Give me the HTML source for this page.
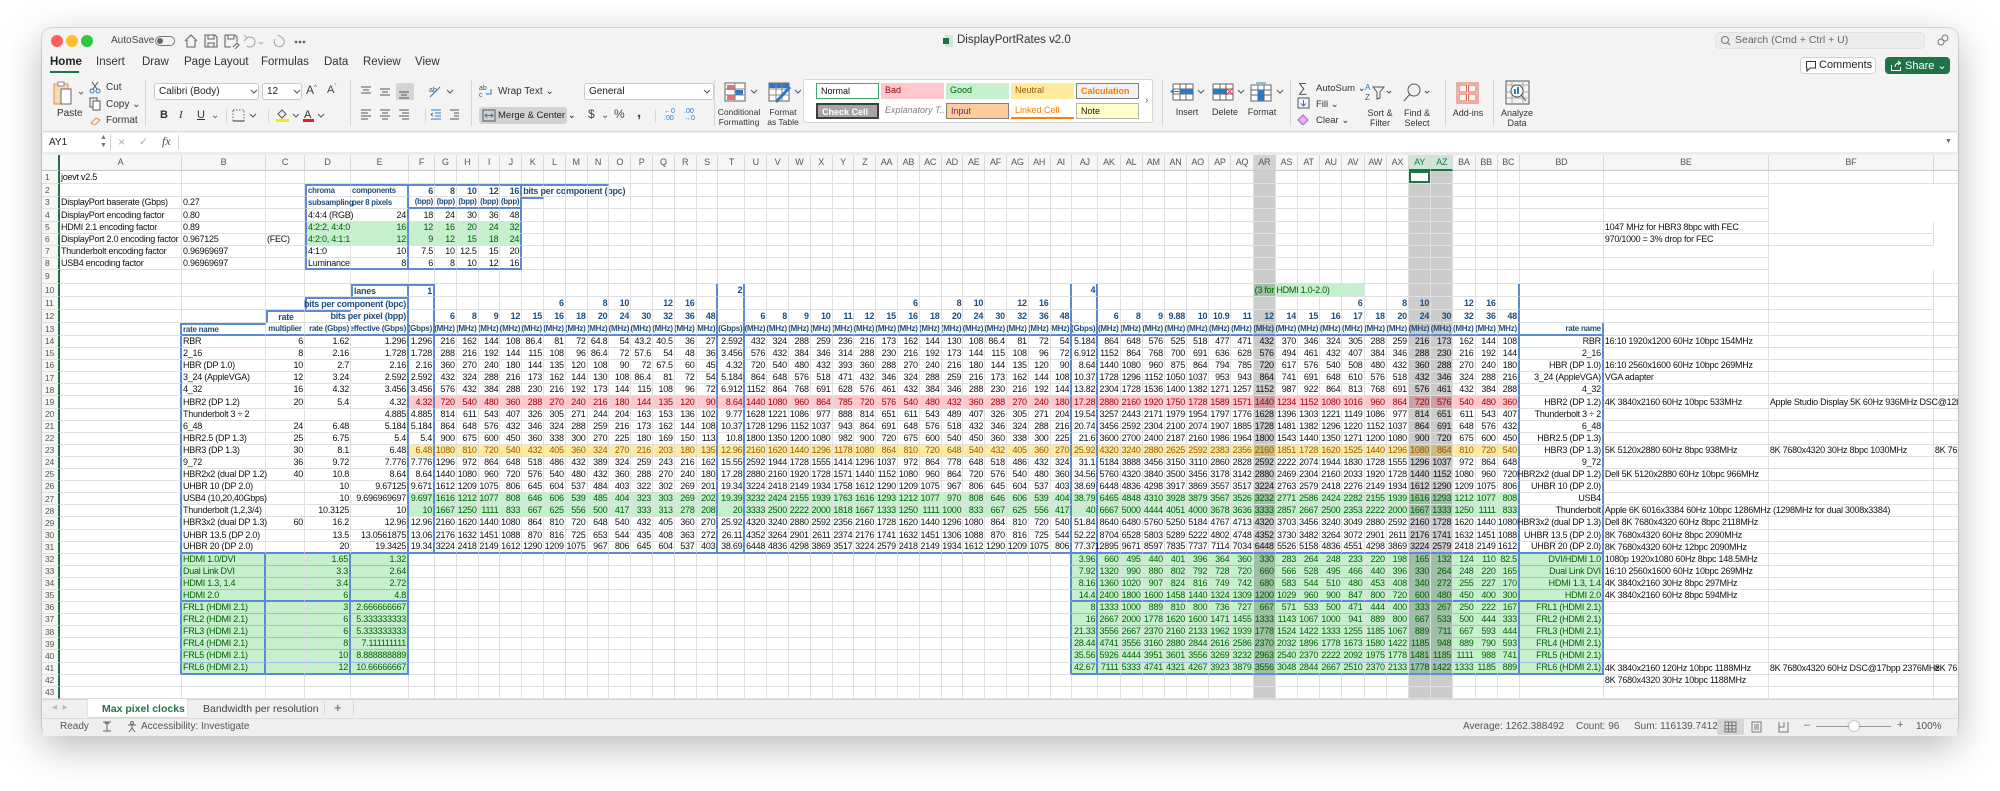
<!DOCTYPE html>
<html><head><meta charset="utf-8">
<style>
*{margin:0;padding:0}
body{width:2000px;height:791px;background:#fff;position:relative;overflow:hidden;font-family:"Liberation Sans",sans-serif;color:#222}
.a{position:absolute;white-space:nowrap}
#win{position:absolute;left:42px;top:28px;width:1916px;height:707px;border-radius:10px;background:#f3f3f3;box-shadow:0 12px 40px rgba(0,0,0,.28),0 0 0 1px rgba(0,0,0,.12);overflow:hidden}
.t11{font-size:11px;color:#333}
.t10{font-size:10px;color:#333}
.sep{position:absolute;width:1px;background:#d6d6d6}
.box{position:absolute;background:#fff;border:1px solid #c8c8c8;border-radius:3px;box-sizing:border-box}
.lbl{position:absolute;font-size:9px;color:#333;text-align:center;line-height:10px;transform:translateX(-50%);white-space:nowrap}
.st{position:absolute;top:83px;height:16px;width:63px;box-sizing:border-box;font-size:9px;line-height:14px;padding-left:4px;white-space:nowrap;overflow:hidden}
.st2{top:103px}
#g{position:absolute;left:42px;top:155px;width:1916px;height:544px;overflow:hidden;background:#fff;font-size:9px;color:#111;letter-spacing:-0.25px}
.r{display:flex;height:12.1px}
.r>*{flex:none;width:21.8px;box-sizing:border-box;border-right:1px solid #e0e0e0;border-bottom:1px solid #e0e0e0;display:flex;align-items:center;justify-content:flex-end;white-space:nowrap;padding:0 1px;font-style:normal;font-weight:normal;line-height:1}
.r>:nth-child(1){width:18px;justify-content:flex-start;padding-left:3px;background:#f6f6f6;color:#555;border-right:2px solid #217346;font-size:8.5px}
.r>:nth-child(2){width:122px;justify-content:flex-start}
.r>:nth-child(3){width:84px;justify-content:flex-start}
.r>:nth-child(4){width:39px}
.r>:nth-child(5){width:46px}
.r>:nth-child(6){width:58px}
.r>:nth-child(7){width:26px}
.r>:nth-child(21){width:27px}
.r>:nth-child(37){width:26px}
.r>:nth-child(n+38):nth-child(-n+56){width:22.2px}
.r>:nth-child(57){width:84px}
.r>:nth-child(58),.r>:nth-child(59){width:165px;justify-content:flex-start}
.r>:nth-child(60){width:30px;justify-content:flex-start}
.ch{height:16px}
.ch>*{justify-content:center!important;background:#f6f6f6;color:#555;border-right:1px solid #d8d8d8;border-bottom:1px solid #c8c8c8;font-size:9px}
.ch>:nth-child(45){background:#d2d2d2}
.ch>:nth-child(52),.ch>:nth-child(53){background:#cfe6d7;color:#217346;border-bottom:2px solid #217346}
.r:not(.ch)>:nth-child(45),.r:not(.ch)>:nth-child(52),.r:not(.ch)>:nth-child(53){background-image:linear-gradient(rgba(0,0,0,.2),rgba(0,0,0,.2))}
.r>.sel{background-image:none!important;background:#fff;box-shadow:inset 0 0 0 2px #217346}
.red>:nth-child(n+7):nth-child(-n+56){background-color:#ffc7ce;color:#9c0006}
.yel>:nth-child(n+7):nth-child(-n+56){background-color:#ffeb9c;color:#9c5700}
.grn>:nth-child(n+7):nth-child(-n+56){background-color:#c6efce;color:#006100}
.h>:nth-child(n+3):nth-child(-n+6),.h>:nth-child(n+37):nth-child(-n+57){background-color:#c6efce;color:#006100}
.t>:nth-child(2),.t>:nth-child(6),.t>:nth-child(7),.t>:nth-child(20),.t>:nth-child(21),.t>:nth-child(36),.t>:nth-child(37),.t>:nth-child(56),.t>:nth-child(57){border-right:2px solid #5b8bd3}
.t0>:nth-child(6),.t0>:nth-child(7),.t0>:nth-child(20),.t0>:nth-child(21),.t0>:nth-child(36),.t0>:nth-child(37),.t0>:nth-child(56){border-right:2px solid #5b8bd3}
.t2>:nth-child(2),.t2>:nth-child(3),.t2>:nth-child(5),.t2>:nth-child(6),.t2>:nth-child(36),.t2>:nth-child(37),.t2>:nth-child(56),.t2>:nth-child(57){border-right:2px solid #5b8bd3}
.t2>:nth-child(3),.t2>:nth-child(4),.t2>:nth-child(5),.t2>:nth-child(6),.t2>:nth-child(n+37):nth-child(-n+57){border-bottom-color:#9dbbe6}
.bb>:nth-child(n+3):nth-child(-n+57){border-bottom:2px solid #5b8bd3}
.bb2>:nth-child(n+3):nth-child(-n+6),.bb2>:nth-child(n+37):nth-child(-n+57){border-bottom:2px solid #5b8bd3}
.hb>*{font-weight:bold;color:#1f4e79}
.hb>:nth-child(1){font-weight:normal;color:#555}
.m>*{overflow:hidden;font-size:8px}
.bh{font-weight:bold!important;color:#1f4e79!important}
.sm{font-size:7.8px}
.l{justify-content:flex-start!important}
.c{justify-content:center!important}
.bL{border-left:2px solid #5b8bd3}
.bR{border-right:2px solid #5b8bd3!important}
.bT{border-top:2px solid #5b8bd3}
.bB{border-bottom:2px solid #5b8bd3!important}
.g{background-color:#c6efce;color:#006100}
.z{position:relative;z-index:2}
</style></head><body>
<div id="win"></div>

<!-- title bar -->
<div class="a" style="left:51px;top:35px;width:12px;height:12px;border-radius:6px;background:#ff5f57"></div>
<div class="a" style="left:66px;top:35px;width:12px;height:12px;border-radius:6px;background:#febc2e"></div>
<div class="a" style="left:81px;top:35px;width:12px;height:12px;border-radius:6px;background:#28c840"></div>
<div class="a" style="left:111px;top:35px;font-size:10px;color:#444">AutoSave</div>
<div class="a" style="left:155px;top:36px;width:20px;height:10px;border:1px solid #777;border-radius:6px;box-sizing:border-box"><div style="position:absolute;left:1px;top:1px;width:6px;height:6px;border-radius:3px;background:#666"></div></div>
<svg class="a" style="left:183px;top:33px" width="130" height="16" viewBox="0 0 130 16" fill="none" stroke="#666" stroke-width="1.1"><path d="M2 8 L8 2 L14 8 M4 7 V14 H12 V7"/><path d="M22 2 H32 L34 4 V14 H22 Z M25 2 V6 H31 V2 M25 14 V10 H31 V14"/><path d="M42 2 H52 L54 4 V9 M42 2 V14 H48 M45 2 V6 H51 V2 M50 14 L54 10 L56 12 L52 16"/><path d="M64 5 A5 5 0 1 1 64 13 M64 5 L61 2 M64 5 L61 8" stroke="#aaa"/><path d="M76 9 L78 11 L80 9" stroke="#aaa"/><path d="M98 4 A5 5 0 1 1 92 6 M98 4 L95 2" stroke="#aaa"/><circle cx="113" cy="9" r=".8" fill="#666"/><circle cx="117" cy="9" r=".8" fill="#666"/><circle cx="121" cy="9" r=".8" fill="#666"/></svg>
<svg class="a" style="left:943px;top:35px" width="10" height="12" viewBox="0 0 10 12"><rect x="2" y="0" width="8" height="12" fill="#cfe7d8"/><rect x="0" y="3" width="6" height="6" fill="#1d7044"/></svg>
<div class="a" style="left:957px;top:34px;font-size:11.5px;color:#333">DisplayPortRates v2.0</div>
<svg class="a" style="left:1052px;top:38px" width="8" height="6"><path d="M1 1 L4 4 L7 1" stroke="#777" fill="none"/></svg>
<div class="a" style="left:1715px;top:32px;width:210px;height:17px;border-radius:5px;background:#ececec;border:1px solid #e0e0e0;box-sizing:border-box"></div>
<svg class="a" style="left:1720px;top:35px" width="11" height="11"><circle cx="5" cy="5" r="3.5" stroke="#777" fill="none"/><path d="M7.5 7.5 L10 10" stroke="#777"/></svg>
<div class="a" style="left:1735px;top:34px;font-size:10.5px;color:#666">Search (Cmd + Ctrl + U)</div>
<svg class="a" style="left:1936px;top:33px" width="14" height="14" fill="none" stroke="#777"><circle cx="9" cy="5" r="3"/><circle cx="5" cy="9" r="3"/></svg>

<!-- tabs -->
<div class="a" style="left:50px;top:56px;font-size:11.5px;font-weight:bold;color:#222">Home</div>
<div class="a" style="left:50px;top:71px;width:29px;height:2px;background:#217346"></div>
<div class="a" style="left:96px;top:56px;font-size:11.5px;color:#333">Insert</div>
<div class="a" style="left:142px;top:56px;font-size:11.5px;color:#333">Draw</div>
<div class="a" style="left:184px;top:56px;font-size:11.5px;color:#333">Page Layout</div>
<div class="a" style="left:261px;top:56px;font-size:11.5px;color:#333">Formulas</div>
<div class="a" style="left:324px;top:56px;font-size:11.5px;color:#333">Data</div>
<div class="a" style="left:363px;top:56px;font-size:11.5px;color:#333">Review</div>
<div class="a" style="left:415px;top:56px;font-size:11.5px;color:#333">View</div>
<div class="a" style="left:1800px;top:57px;width:76px;height:17px;background:#fff;border:1px solid #d0d0d0;border-radius:4px;box-sizing:border-box"></div>
<svg class="a" style="left:1805px;top:60px" width="12" height="12" fill="none" stroke="#333"><path d="M1.5 1.5 H10.5 V8 H5 L2 11 V8 H1.5 Z"/></svg>
<div class="a" style="left:1819px;top:59px;font-size:11px;color:#222">Comments</div>
<div class="a" style="left:1885px;top:57px;width:65px;height:17px;background:#217346;border-radius:4px"></div>
<svg class="a" style="left:1890px;top:60px" width="12" height="12" fill="none" stroke="#fff"><path d="M1.5 5 V10.5 H10.5 V7 M5 7 C5 4 7 3 10 3 M8 1 L10.5 3 L8 5"/></svg>
<div class="a" style="left:1905px;top:59px;font-size:11px;color:#fff">Share ⌄</div>

<!-- ribbon: clipboard -->
<svg class="a" style="left:52px;top:81px" width="34" height="26" viewBox="0 0 34 26"><rect x="2" y="3" width="14" height="20" fill="#f6d9b5" stroke="#e0913a"/><rect x="6" y="1" width="6" height="4" fill="#fff" stroke="#888"/><rect x="9" y="8" width="10" height="15" fill="#fff" stroke="#666"/><path d="M27 11 L29 13 L31 11" stroke="#666" fill="none"/></svg>
<div class="a t10" style="left:57px;top:108px">Paste</div>
<svg class="a" style="left:88px;top:81px" width="14" height="44" fill="none" stroke="#555"><circle cx="4" cy="10" r="2" stroke="#2b78c5"/><circle cx="10" cy="10" r="2" stroke="#2b78c5"/><path d="M5 8 L10 1 M9 8 L4 1"/><rect x="2" y="17" width="7" height="9"/><rect x="5" y="20" width="7" height="9" fill="#fff"/><path d="M3 42 L8 37 L12 39 L7 44 Z" stroke="#e0913a"/></svg>
<div class="a t10" style="left:106px;top:82px">Cut</div>
<div class="a t10" style="left:106px;top:99px">Copy ⌄</div>
<div class="a t10" style="left:106px;top:115px">Format</div>
<div class="sep" style="left:145px;top:80px;height:46px"></div>
<!-- font -->
<div class="box" style="left:154px;top:83px;width:105px;height:17px"></div>
<div class="a t10" style="left:159px;top:86px;color:#222">Calibri (Body)</div>
<svg class="a" style="left:250px;top:89px" width="8" height="6"><path d="M1 1 L4 4 L7 1" stroke="#555" fill="none"/></svg>
<div class="box" style="left:262px;top:83px;width:40px;height:17px"></div>
<div class="a t10" style="left:267px;top:86px;color:#222">12</div>
<svg class="a" style="left:293px;top:89px" width="8" height="6"><path d="M1 1 L4 4 L7 1" stroke="#555" fill="none"/></svg>
<div class="a" style="left:306px;top:83px;font-size:12px;color:#444">A<sup style="font-size:6px">^</sup></div>
<div class="a" style="left:327px;top:84px;font-size:11px;color:#444">A<sup style="font-size:6px">ˇ</sup></div>
<div class="a" style="left:160px;top:109px;font-size:11px;font-weight:bold;color:#333">B</div>
<div class="a" style="left:179px;top:109px;font-size:11px;font-style:italic;font-family:'Liberation Serif',serif;color:#333">I</div>
<div class="a" style="left:197px;top:109px;font-size:11px;text-decoration:underline;color:#333">U</div>
<div class="a t10" style="left:211px;top:110px;color:#555">⌄</div>
<div class="sep" style="left:226px;top:109px;height:14px"></div>
<svg class="a" style="left:232px;top:109px" width="30" height="13" fill="none" stroke="#666"><rect x="1" y="1" width="11" height="11" stroke-dasharray="1.5 1.5"/><path d="M1 12 H12" stroke="#333"/><path d="M18 5 L21 8 L24 5" stroke="#555"/></svg>
<div class="sep" style="left:268px;top:109px;height:14px"></div>
<svg class="a" style="left:275px;top:107px" width="50" height="16"><path d="M3 7 L7 3 L11 7 L7 11 Z" stroke="#555" fill="none"/><rect x="1" y="12" width="13" height="3" fill="#ffe600"/><path d="M18 7 L21 10 L24 7" stroke="#555" fill="none"/><text x="29" y="11" font-size="11" fill="#333" font-family="Liberation Sans">A</text><rect x="28" y="12" width="11" height="3" fill="#e02020"/><path d="M43 7 L46 10 L49 7" stroke="#555" fill="none"/></svg>
<div class="sep" style="left:350px;top:80px;height:46px"></div>
<!-- alignment -->
<div class="a" style="left:396px;top:83px;width:18px;height:17px;background:#d4d4d4;border-radius:2px"></div>
<svg class="a" style="left:359px;top:85px" width="100" height="40" fill="none" stroke="#555"><path d="M2 2 H12 M4 5 H10 M2 8 H12"/><path d="M21 4 H31 M23 7 H29 M21 10 H31"/><path d="M40 7 H50 M42 10 H48 M40 13 H50"/><path d="M2 25 H12 M2 28 H9 M2 31 H12 M2 34 H9"/><path d="M21 25 H31 M23 28 H29 M21 31 H31 M23 34 H29"/><path d="M40 25 H50 M43 28 H50 M40 31 H50 M43 34 H50"/><path d="M72 25 H82 M76 28 H82 M76 31 H82 M72 34 H82 M74 28 L72 29.5 L74 31" stroke="#2b78c5"/><path d="M91 25 H101 M95 28 H101 M95 31 H101 M91 34 H101"/></svg>
<svg class="a" style="left:428px;top:84px" width="28" height="16" fill="none" stroke="#555"><path d="M2 13 L12 3" stroke="#2b78c5"/><text x="1" y="8" font-size="7" fill="#555" stroke="none" font-family="Liberation Sans">ab</text><path d="M19 6 L22 9 L25 6"/></svg>
<div class="sep" style="left:425px;top:109px;height:14px"></div>
<div class="sep" style="left:471px;top:80px;height:46px"></div>
<svg class="a" style="left:478px;top:83px" width="16" height="16"><text x="1" y="7" font-size="7" fill="#555" font-family="Liberation Sans">ab</text><text x="1" y="14" font-size="7" fill="#555" font-family="Liberation Sans">c</text><path d="M8 11 H13 V6" stroke="#2b78c5" fill="none"/></svg>
<div class="a t10" style="left:498px;top:86px">Wrap Text ⌄</div>
<div class="a" style="left:479px;top:107px;width:88px;height:17px;background:#d2d2d2;border-radius:3px"></div>
<svg class="a" style="left:482px;top:109px" width="14" height="13" fill="none" stroke="#2b78c5"><rect x="1" y="1" width="12" height="11" stroke="#555"/><path d="M3 6.5 H11 M5 4.5 L3 6.5 L5 8.5 M9 4.5 L11 6.5 L9 8.5"/></svg>
<div class="a" style="left:498px;top:110px;font-size:9.5px;color:#222">Merge &amp; Center ⌄</div>
<!-- number -->
<div class="box" style="left:584px;top:83px;width:130px;height:17px"></div>
<div class="a t10" style="left:589px;top:86px;color:#222">General</div>
<svg class="a" style="left:703px;top:89px" width="8" height="6"><path d="M1 1 L4 4 L7 1" stroke="#555" fill="none"/></svg>
<div class="a" style="left:588px;top:107px;font-size:12px;color:#444">$</div>
<div class="a t10" style="left:601px;top:110px;color:#555">⌄</div>
<div class="a" style="left:614px;top:107px;font-size:12px;color:#444">%</div>
<div class="a" style="left:637px;top:104px;font-size:15px;font-weight:bold;color:#444">,</div>
<div class="sep" style="left:655px;top:109px;height:14px"></div>
<div class="a" style="left:664px;top:108px;font-size:7px;line-height:7px;color:#2b78c5">←0<br>.00</div>
<div class="a" style="left:684px;top:108px;font-size:7px;line-height:7px;color:#2b78c5">.00<br>→0</div>
<div class="sep" style="left:714px;top:80px;height:46px"></div>
<!-- styles -->
<svg class="a" style="left:724px;top:82px" width="36" height="20"><rect x="1" y="1" width="20" height="18" fill="#fff" stroke="#666"/><rect x="3" y="3" width="8" height="5" fill="#f06a78"/><rect x="11" y="8" width="8" height="5" fill="#2b78c5"/><rect x="3" y="13" width="8" height="5" fill="#f06a78"/><path d="M1 7 H21 M1 13 H21 M11 1 V19" stroke="#888"/><path d="M27 8 L30 11 L33 8" stroke="#555" fill="none"/></svg>
<div class="lbl" style="left:739px;top:107px;font-size:8.5px">Conditional<br>Formatting</div>
<svg class="a" style="left:768px;top:82px" width="36" height="22"><rect x="1" y="1" width="20" height="18" fill="#fff" stroke="#666"/><rect x="1" y="1" width="20" height="5" fill="#2b78c5"/><path d="M1 7 H21 M1 13 H21 M8 1 V19 M14 1 V19" stroke="#888"/><path d="M8 20 L22 5" stroke="#2b78c5" stroke-width="3"/><path d="M27 8 L30 11 L33 8" stroke="#555" fill="none"/></svg>
<div class="lbl" style="left:783px;top:107px;font-size:8.5px">Format<br>as Table</div>
<div class="a" style="left:803px;top:79px;width:350px;height:44px;background:#fff;border:1px solid #d5d5d5;border-radius:3px;box-sizing:border-box"></div>
<div class="st" style="left:816px;background:#fff;border:1px solid #3fa56e;color:#111">Normal</div>
<div class="st" style="left:881px;background:#ffc7ce;color:#9c0006">Bad</div>
<div class="st" style="left:946px;background:#c6efce;color:#006100">Good</div>
<div class="st" style="left:1011px;background:#ffeb9c;color:#9c5700">Neutral</div>
<div class="st" style="left:1076px;background:#f2f2f2;border:1px solid #7f7f7f;color:#fa7d00;font-weight:bold">Calculation</div>
<div class="st st2" style="left:816px;background:#a5a5a5;border:2px double #3f3f3f;color:#fff;font-weight:bold">Check Cell</div>
<div class="st st2" style="left:881px;color:#7f7f7f;font-style:italic">Explanatory T...</div>
<div class="st st2" style="left:946px;background:#ffcc99;border:1px solid #7f7f7f;color:#3f3f76">Input</div>
<div class="st st2" style="left:1011px;color:#fa7d00;border-bottom:2px solid #ff8001">Linked Cell</div>
<div class="st st2" style="left:1076px;background:#ffffcc;border:1px solid #b2b2b2;color:#111">Note</div>
<div class="a t10" style="left:1145px;top:95px;color:#555">›</div>
<div class="sep" style="left:1162px;top:80px;height:46px"></div>
<svg class="a" style="left:1170px;top:82px" width="120" height="20" fill="none" stroke="#666"><rect x="3" y="2" width="20" height="16" fill="#fff"/><path d="M3 7 H23 M3 12 H23 M10 2 V18 M16 2 V18"/><rect x="10" y="7" width="13" height="5" fill="#2b78c5" stroke="none"/><path d="M1 9.5 H9 M4 7 L1 9.5 L4 12" stroke="#2b78c5"/><path d="M28 8 L31 11 L34 8" stroke="#555"/><rect x="43" y="2" width="20" height="16" fill="#fff"/><path d="M43 7 H63 M43 12 H63 M50 2 V18 M56 2 V18"/><rect x="43" y="7" width="14" height="5" fill="#2b78c5" stroke="none"/><path d="M56 6 L63 13 M63 6 L56 13" stroke="#e04040"/><path d="M68 8 L71 11 L74 8" stroke="#555"/><rect x="81" y="3" width="20" height="16" fill="#fff"/><path d="M81 8 H101 M81 13 H101 M88 3 V19 M94 3 V19"/><rect x="88" y="8" width="6" height="11" fill="#2b78c5" stroke="none"/><path d="M86 1 H96" stroke="#2b78c5"/><path d="M107 8 L110 11 L113 8" stroke="#555"/></svg>
<div class="lbl" style="left:1187px;top:107px">Insert</div>
<div class="lbl" style="left:1225px;top:107px">Delete</div>
<div class="lbl" style="left:1262px;top:107px">Format</div>
<div class="sep" style="left:1290px;top:80px;height:46px"></div>
<div class="a" style="left:1298px;top:80px;font-size:13px;color:#555">∑</div>
<div class="a" style="left:1316px;top:83px;font-size:9.5px;color:#333">AutoSum ⌄</div>
<svg class="a" style="left:1297px;top:97px" width="13" height="12" fill="none"><rect x="1" y="1" width="11" height="10" stroke="#555"/><path d="M6.5 3 V9 M4 6.5 L6.5 9 L9 6.5" stroke="#2b78c5"/></svg>
<div class="a" style="left:1316px;top:99px;font-size:9.5px;color:#333">Fill ⌄</div>
<svg class="a" style="left:1297px;top:113px" width="13" height="12"><path d="M1 7 L6 2 L11 7 L6 12 Z" fill="#e6b4f0" stroke="#b05cc8"/></svg>
<div class="a" style="left:1316px;top:115px;font-size:9.5px;color:#333">Clear ⌄</div>
<svg class="a" style="left:1364px;top:82px" width="70" height="22" fill="none" stroke="#555"><text x="1" y="8" font-size="8" fill="#2b78c5" stroke="none" font-family="Liberation Sans">A</text><text x="1" y="18" font-size="8" fill="#555" stroke="none" font-family="Liberation Sans">Z</text><path d="M9 5 H20 L16 10 V16 L13 17 V10 Z"/><path d="M23 9 L25 11 L27 9"/><circle cx="50" cy="8" r="6"/><path d="M46 12 L40 19"/><path d="M61 9 L63 11 L65 9"/></svg>
<div class="lbl" style="left:1380px;top:108px">Sort &amp;<br>Filter</div>
<div class="lbl" style="left:1417px;top:108px">Find &amp;<br>Select</div>
<div class="sep" style="left:1445px;top:80px;height:46px"></div>
<svg class="a" style="left:1456px;top:82px" width="23" height="22" fill="none" stroke="#e0684c"><rect x="1" y="1" width="21" height="20"/><rect x="3" y="3" width="7.5" height="7"/><rect x="12.5" y="3" width="7.5" height="7"/><rect x="3" y="12" width="7.5" height="7"/><rect x="12.5" y="12" width="7.5" height="7"/></svg>
<div class="lbl" style="left:1468px;top:108px">Add-ins</div>
<div class="sep" style="left:1493px;top:80px;height:46px"></div>
<svg class="a" style="left:1505px;top:80px" width="25" height="25" fill="none" stroke="#555"><rect x="1" y="1" width="23" height="23"/><path d="M1 5 H24 M1 12 H24 M1 18 H24 M7 1 V24 M18 1 V24" stroke="#aaa"/><circle cx="12" cy="11" r="6" fill="#fff"/><rect x="9" y="9" width="2" height="5" fill="#2b78c5" stroke="none"/><rect x="12" y="7" width="2" height="7" fill="#2b78c5" stroke="none"/><path d="M16 15 L21 21"/></svg>
<div class="lbl" style="left:1517px;top:108px">Analyze<br>Data</div>
<div class="a" style="left:43px;top:131px;width:1914px;height:1px;background:#d8d8d8"></div>
<!-- formula bar -->
<div class="a" style="left:43px;top:133px;width:1914px;height:19px;background:#fff"></div>
<div class="a t10" style="left:49px;top:137px;color:#222">AY1</div>
<div class="a" style="left:100px;top:134px;font-size:7px;line-height:8px;color:#777">▲<br>▼</div>
<div class="sep" style="left:110px;top:134px;height:17px"></div>
<div class="a" style="left:118px;top:135px;font-size:12px;color:#aaa">×</div>
<div class="a" style="left:139px;top:135px;font-size:11px;color:#aaa">✓</div>
<div class="a" style="left:162px;top:134px;font-size:12px;font-style:italic;font-family:'Liberation Serif',serif;color:#444">fx</div>
<div class="sep" style="left:178px;top:135px;height:15px"></div>
<div class="a" style="left:1945px;top:138px;font-size:7px;color:#666">▼</div>
<div class="a" style="left:43px;top:152px;width:1914px;height:3px;background:#ececec"></div>

<!-- grid -->
<div id="g">
<div class="r ch"><b></b><i>A</i><i>B</i><i>C</i><i>D</i><i>E</i><i>F</i><i>G</i><i>H</i><i>I</i><i>J</i><i>K</i><i>L</i><i>M</i><i>N</i><i>O</i><i>P</i><i>Q</i><i>R</i><i>S</i><i>T</i><i>U</i><i>V</i><i>W</i><i>X</i><i>Y</i><i>Z</i><i>AA</i><i>AB</i><i>AC</i><i>AD</i><i>AE</i><i>AF</i><i>AG</i><i>AH</i><i>AI</i><i>AJ</i><i>AK</i><i>AL</i><i>AM</i><i>AN</i><i>AO</i><i>AP</i><i>AQ</i><i>AR</i><i>AS</i><i>AT</i><i>AU</i><i>AV</i><i>AW</i><i>AX</i><i>AY</i><i>AZ</i><i>BA</i><i>BB</i><i>BC</i><i>BD</i><i>BE</i><i>BF</i><i></i></div>
<div class="r" style="height:13px"><b>1</b><i>joevt v2.5</i><i></i><i></i><i></i><i></i><i></i><i></i><i></i><i></i><i></i><i></i><i></i><i></i><i></i><i></i><i></i><i></i><i></i><i></i><i></i><i></i><i></i><i></i><i></i><i></i><i></i><i></i><i></i><i></i><i></i><i></i><i></i><i></i><i></i><i></i><i></i><i></i><i></i><i></i><i></i><i></i><i></i><i></i><i></i><i></i><i></i><i></i><i></i><i></i><i></i><i class="sel"></i><i></i><i></i><i></i><i></i><i></i><i></i><i></i><i></i></div>
<div class="r" style="height:13px"><b>2</b><i></i><i></i><i></i><i class="bh sm l bL bT">chroma</i><i class="bh sm l bT bR">components</i><i class="bh bT">6</i><i class="bh bT">8</i><i class="bh bT">10</i><i class="bh bT">12</i><i class="bh bT bR">16</i><i class="bh l bT">bits per component (bpc)</i><i class="bT"></i><i class="bT"></i><i class="bT"></i><i></i><i></i><i></i><i></i><i></i><i></i><i></i><i></i><i></i><i></i><i></i><i></i><i></i><i></i><i></i><i></i><i></i><i></i><i></i><i></i><i></i><i></i><i></i><i></i><i></i><i></i><i></i><i></i><i></i><i></i><i></i><i></i><i></i><i></i><i></i><i></i><i></i><i></i><i></i><i></i><i></i><i></i><i></i></div>
<div class="r" style="height:12px"><b>3</b><i>DisplayPort baserate (Gbps)</i><i>0.27</i><i></i><i class="bh sm l bL">subsampling</i><i class="bh sm l bR">per 8 pixels</i><i class="bh sm bB">(bpp)</i><i class="bh sm bB">(bpp)</i><i class="bh sm bB">(bpp)</i><i class="bh sm bB">(bpp)</i><i class="bh sm bB bR">(bpp)</i><i class="bT"></i><i></i><i></i><i></i><i></i><i></i><i></i><i></i><i></i><i></i><i></i><i></i><i></i><i></i><i></i><i></i><i></i><i></i><i></i><i></i><i></i><i></i><i></i><i></i><i></i><i></i><i></i><i></i><i></i><i></i><i></i><i></i><i></i><i></i><i></i><i></i><i></i><i></i><i></i><i></i><i></i><i></i><i></i><i></i><i></i><i></i><i></i></div>
<div class="r" style="height:13px"><b>4</b><i>DisplayPort encoding factor</i><i>0.80</i><i></i><i class="l bL">4:4:4 (RGB)</i><i class="bR">24</i><i>18</i><i>24</i><i>30</i><i>36</i><i class="bR">48</i><i></i><i></i><i></i><i></i><i></i><i></i><i></i><i></i><i></i><i></i><i></i><i></i><i></i><i></i><i></i><i></i><i></i><i></i><i></i><i></i><i></i><i></i><i></i><i></i><i></i><i></i><i></i><i></i><i></i><i></i><i></i><i></i><i></i><i></i><i></i><i></i><i></i><i></i><i></i><i></i><i></i><i></i><i></i><i></i><i></i><i></i><i></i></div>
<div class="r" style="height:12px"><b>5</b><i>HDMI 2.1 encoding factor</i><i>0.89</i><i></i><i class="l bL g">4:2:2, 4:4:0</i><i class="bR g">16</i><i class="g">12</i><i class="g">16</i><i class="g">20</i><i class="g">24</i><i class="bR g">32</i><i></i><i></i><i></i><i></i><i></i><i></i><i></i><i></i><i></i><i></i><i></i><i></i><i></i><i></i><i></i><i></i><i></i><i></i><i></i><i></i><i></i><i></i><i></i><i></i><i></i><i></i><i></i><i></i><i></i><i></i><i></i><i></i><i></i><i></i><i></i><i></i><i></i><i></i><i></i><i></i><i></i><i></i><i></i><i></i><i></i><i></i><i>1047 MHz for HBR3 8bpc with FEC</i><i></i></div>
<div class="r" style="height:12px"><b>6</b><i>DisplayPort 2.0 encoding factor</i><i>0.967125</i><i class="l">(FEC)</i><i class="l bL g">4:2:0, 4:1:1</i><i class="bR g">12</i><i class="g">9</i><i class="g">12</i><i class="g">15</i><i class="g">18</i><i class="bR g">24</i><i></i><i></i><i></i><i></i><i></i><i></i><i></i><i></i><i></i><i></i><i></i><i></i><i></i><i></i><i></i><i></i><i></i><i></i><i></i><i></i><i></i><i></i><i></i><i></i><i></i><i></i><i></i><i></i><i></i><i></i><i></i><i></i><i></i><i></i><i></i><i></i><i></i><i></i><i></i><i></i><i></i><i></i><i></i><i></i><i></i><i></i><i>970/1000 = 3% drop for FEC</i><i></i></div>
<div class="r" style="height:12px"><b>7</b><i>Thunderbolt encoding factor</i><i>0.96969697</i><i></i><i class="l bL">4:1:0</i><i class="bR">10</i><i>7.5</i><i>10</i><i>12.5</i><i>15</i><i class="bR">20</i><i></i><i></i><i></i><i></i><i></i><i></i><i></i><i></i><i></i><i></i><i></i><i></i><i></i><i></i><i></i><i></i><i></i><i></i><i></i><i></i><i></i><i></i><i></i><i></i><i></i><i></i><i></i><i></i><i></i><i></i><i></i><i></i><i></i><i></i><i></i><i></i><i></i><i></i><i></i><i></i><i></i><i></i><i></i><i></i><i></i><i></i><i></i></div>
<div class="r" style="height:12px"><b>8</b><i>USB4 encoding factor</i><i>0.96969697</i><i></i><i class="l bL bB">Luminance</i><i class="bR bB">8</i><i class="bB">6</i><i class="bB">8</i><i class="bB">10</i><i class="bB">12</i><i class="bR bB">16</i><i></i><i></i><i></i><i></i><i></i><i></i><i></i><i></i><i></i><i></i><i></i><i></i><i></i><i></i><i></i><i></i><i></i><i></i><i></i><i></i><i></i><i></i><i></i><i></i><i></i><i></i><i></i><i></i><i></i><i></i><i></i><i></i><i></i><i></i><i></i><i></i><i></i><i></i><i></i><i></i><i></i><i></i><i></i><i></i><i></i><i></i><i></i></div>
<div class="r" style="height:14px"><b>9</b><i></i><i></i><i></i><i></i><i></i><i></i><i></i><i></i><i></i><i></i><i></i><i></i><i></i><i></i><i></i><i></i><i></i><i></i><i></i><i></i><i></i><i></i><i></i><i></i><i></i><i></i><i></i><i></i><i></i><i></i><i></i><i></i><i></i><i></i><i></i><i></i><i></i><i></i><i></i><i></i><i></i><i></i><i></i><i></i><i></i><i></i><i></i><i></i><i></i><i></i><i></i><i></i><i></i><i></i><i></i><i></i><i></i><i></i><i></i></div>
<div class="r hb t0" style="height:13px"><b>10</b><i></i><i></i><i></i><i></i><i class="l bL bT">lanes</i><i class="bT">1</i><i></i><i></i><i></i><i></i><i></i><i></i><i></i><i></i><i></i><i></i><i></i><i></i><i></i><i>2</i><i></i><i></i><i></i><i></i><i></i><i></i><i></i><i></i><i></i><i></i><i></i><i></i><i></i><i></i><i></i><i>4</i><i></i><i></i><i></i><i></i><i></i><i></i><i></i><i class="l g z" style="font-weight:normal">(3 for HDMI 1.0-2.0)</i><i class="g"></i><i class="g"></i><i class="g"></i><i class="g"></i><i></i><i></i><i></i><i></i><i></i><i></i><i></i><i></i><i></i><i></i><i></i></div>
<div class="r hb t0" style="height:13px"><b>11</b><i></i><i></i><i></i><i class="bL bT"></i><i class="bT">bits per component (bpc)</i><i></i><i></i><i></i><i></i><i></i><i></i><i>6</i><i></i><i>8</i><i>10</i><i></i><i>12</i><i>16</i><i></i><i></i><i></i><i></i><i></i><i></i><i></i><i></i><i></i><i>6</i><i></i><i>8</i><i>10</i><i></i><i>12</i><i>16</i><i></i><i></i><i></i><i></i><i></i><i></i><i></i><i></i><i></i><i></i><i></i><i></i><i></i><i>6</i><i></i><i>8</i><i>10</i><i></i><i>12</i><i>16</i><i></i><i></i><i></i><i></i></div>
<div class="r hb t0" style="height:13px"><b>12</b><i></i><i></i><i class="c bL bT">rate</i><i class="bT"></i><i>bits per pixel (bpp)</i><i></i><i>6</i><i>8</i><i>9</i><i>12</i><i>15</i><i>16</i><i>18</i><i>20</i><i>24</i><i>30</i><i>32</i><i>36</i><i>48</i><i></i><i>6</i><i>8</i><i>9</i><i>10</i><i>11</i><i>12</i><i>15</i><i>16</i><i>18</i><i>20</i><i>24</i><i>30</i><i>32</i><i>36</i><i>48</i><i></i><i>6</i><i>8</i><i>9</i><i>9.88</i><i>10</i><i>10.9</i><i>11</i><i>12</i><i>14</i><i>15</i><i>16</i><i>17</i><i>18</i><i>20</i><i>24</i><i>30</i><i>32</i><i>36</i><i>48</i><i></i><i></i><i></i><i></i></div>
<div class="r hb m t bb" style="height:13px"><b>13</b><i></i><i class="bT">rate name</i><i class="c">multiplier</i><i>rate (Gbps)</i><i>effective (Gbps)</i><i>(Gbps)</i><i>(MHz)</i><i>(MHz)</i><i>(MHz)</i><i>(MHz)</i><i>(MHz)</i><i>(MHz)</i><i>(MHz)</i><i>(MHz)</i><i>(MHz)</i><i>(MHz)</i><i>(MHz)</i><i>(MHz)</i><i>(MHz)</i><i>(Gbps)</i><i>(MHz)</i><i>(MHz)</i><i>(MHz)</i><i>(MHz)</i><i>(MHz)</i><i>(MHz)</i><i>(MHz)</i><i>(MHz)</i><i>(MHz)</i><i>(MHz)</i><i>(MHz)</i><i>(MHz)</i><i>(MHz)</i><i>(MHz)</i><i>(MHz)</i><i>(Gbps)</i><i>(MHz)</i><i>(MHz)</i><i>(MHz)</i><i>(MHz)</i><i>(MHz)</i><i>(MHz)</i><i>(MHz)</i><i>(MHz)</i><i>(MHz)</i><i>(MHz)</i><i>(MHz)</i><i>(MHz)</i><i>(MHz)</i><i>(MHz)</i><i>(MHz)</i><i>(MHz)</i><i>(MHz)</i><i>(MHz)</i><i>(MHz)</i><i>rate name</i><i></i><i></i><i></i></div>
<div class="r t"><b>14</b><i></i><i>RBR</i><i>6</i><i>1.62</i><i>1.296</i><i>1.296</i><i>216</i><i>162</i><i>144</i><i>108</i><i>86.4</i><i>81</i><i>72</i><i>64.8</i><i>54</i><i>43.2</i><i>40.5</i><i>36</i><i>27</i><i>2.592</i><i>432</i><i>324</i><i>288</i><i>259</i><i>236</i><i>216</i><i>173</i><i>162</i><i>144</i><i>130</i><i>108</i><i>86.4</i><i>81</i><i>72</i><i>54</i><i>5.184</i><i>864</i><i>648</i><i>576</i><i>525</i><i>518</i><i>477</i><i>471</i><i>432</i><i>370</i><i>346</i><i>324</i><i>305</i><i>288</i><i>259</i><i>216</i><i>173</i><i>162</i><i>144</i><i>108</i><i>RBR</i><i>16:10 1920x1200 60Hz 10bpc 154MHz</i><i></i><i></i></div>
<div class="r t"><b>15</b><i></i><i>2_16</i><i>8</i><i>2.16</i><i>1.728</i><i>1.728</i><i>288</i><i>216</i><i>192</i><i>144</i><i>115</i><i>108</i><i>96</i><i>86.4</i><i>72</i><i>57.6</i><i>54</i><i>48</i><i>36</i><i>3.456</i><i>576</i><i>432</i><i>384</i><i>346</i><i>314</i><i>288</i><i>230</i><i>216</i><i>192</i><i>173</i><i>144</i><i>115</i><i>108</i><i>96</i><i>72</i><i>6.912</i><i>1152</i><i>864</i><i>768</i><i>700</i><i>691</i><i>636</i><i>628</i><i>576</i><i>494</i><i>461</i><i>432</i><i>407</i><i>384</i><i>346</i><i>288</i><i>230</i><i>216</i><i>192</i><i>144</i><i>2_16</i><i></i><i></i><i></i></div>
<div class="r t"><b>16</b><i></i><i>HBR (DP 1.0)</i><i>10</i><i>2.7</i><i>2.16</i><i>2.16</i><i>360</i><i>270</i><i>240</i><i>180</i><i>144</i><i>135</i><i>120</i><i>108</i><i>90</i><i>72</i><i>67.5</i><i>60</i><i>45</i><i>4.32</i><i>720</i><i>540</i><i>480</i><i>432</i><i>393</i><i>360</i><i>288</i><i>270</i><i>240</i><i>216</i><i>180</i><i>144</i><i>135</i><i>120</i><i>90</i><i>8.64</i><i>1440</i><i>1080</i><i>960</i><i>875</i><i>864</i><i>794</i><i>785</i><i>720</i><i>617</i><i>576</i><i>540</i><i>508</i><i>480</i><i>432</i><i>360</i><i>288</i><i>270</i><i>240</i><i>180</i><i>HBR (DP 1.0)</i><i>16:10 2560x1600 60Hz 10bpc 269MHz</i><i></i><i></i></div>
<div class="r t"><b>17</b><i></i><i>3_24 (AppleVGA)</i><i>12</i><i>3.24</i><i>2.592</i><i>2.592</i><i>432</i><i>324</i><i>288</i><i>216</i><i>173</i><i>162</i><i>144</i><i>130</i><i>108</i><i>86.4</i><i>81</i><i>72</i><i>54</i><i>5.184</i><i>864</i><i>648</i><i>576</i><i>518</i><i>471</i><i>432</i><i>346</i><i>324</i><i>288</i><i>259</i><i>216</i><i>173</i><i>162</i><i>144</i><i>108</i><i>10.37</i><i>1728</i><i>1296</i><i>1152</i><i>1050</i><i>1037</i><i>953</i><i>943</i><i>864</i><i>741</i><i>691</i><i>648</i><i>610</i><i>576</i><i>518</i><i>432</i><i>346</i><i>324</i><i>288</i><i>216</i><i>3_24 (AppleVGA)</i><i>VGA adapter</i><i></i><i></i></div>
<div class="r t"><b>18</b><i></i><i>4_32</i><i>16</i><i>4.32</i><i>3.456</i><i>3.456</i><i>576</i><i>432</i><i>384</i><i>288</i><i>230</i><i>216</i><i>192</i><i>173</i><i>144</i><i>115</i><i>108</i><i>96</i><i>72</i><i>6.912</i><i>1152</i><i>864</i><i>768</i><i>691</i><i>628</i><i>576</i><i>461</i><i>432</i><i>384</i><i>346</i><i>288</i><i>230</i><i>216</i><i>192</i><i>144</i><i>13.82</i><i>2304</i><i>1728</i><i>1536</i><i>1400</i><i>1382</i><i>1271</i><i>1257</i><i>1152</i><i>987</i><i>922</i><i>864</i><i>813</i><i>768</i><i>691</i><i>576</i><i>461</i><i>432</i><i>384</i><i>288</i><i>4_32</i><i></i><i></i><i></i></div>
<div class="r t red"><b>19</b><i></i><i>HBR2 (DP 1.2)</i><i>20</i><i>5.4</i><i>4.32</i><i>4.32</i><i>720</i><i>540</i><i>480</i><i>360</i><i>288</i><i>270</i><i>240</i><i>216</i><i>180</i><i>144</i><i>135</i><i>120</i><i>90</i><i>8.64</i><i>1440</i><i>1080</i><i>960</i><i>864</i><i>785</i><i>720</i><i>576</i><i>540</i><i>480</i><i>432</i><i>360</i><i>288</i><i>270</i><i>240</i><i>180</i><i>17.28</i><i>2880</i><i>2160</i><i>1920</i><i>1750</i><i>1728</i><i>1589</i><i>1571</i><i>1440</i><i>1234</i><i>1152</i><i>1080</i><i>1016</i><i>960</i><i>864</i><i>720</i><i>576</i><i>540</i><i>480</i><i>360</i><i>HBR2 (DP 1.2)</i><i>4K 3840x2160 60Hz 10bpc 533MHz</i><i>Apple Studio Display 5K 60Hz 936MHz DSC@12bpp</i><i></i></div>
<div class="r t"><b>20</b><i></i><i>Thunderbolt 3 ÷ 2</i><i></i><i></i><i>4.885</i><i>4.885</i><i>814</i><i>611</i><i>543</i><i>407</i><i>326</i><i>305</i><i>271</i><i>244</i><i>204</i><i>163</i><i>153</i><i>136</i><i>102</i><i>9.77</i><i>1628</i><i>1221</i><i>1086</i><i>977</i><i>888</i><i>814</i><i>651</i><i>611</i><i>543</i><i>489</i><i>407</i><i>326</i><i>305</i><i>271</i><i>204</i><i>19.54</i><i>3257</i><i>2443</i><i>2171</i><i>1979</i><i>1954</i><i>1797</i><i>1776</i><i>1628</i><i>1396</i><i>1303</i><i>1221</i><i>1149</i><i>1086</i><i>977</i><i>814</i><i>651</i><i>611</i><i>543</i><i>407</i><i>Thunderbolt 3 ÷ 2</i><i></i><i></i><i></i></div>
<div class="r t"><b>21</b><i></i><i>6_48</i><i>24</i><i>6.48</i><i>5.184</i><i>5.184</i><i>864</i><i>648</i><i>576</i><i>432</i><i>346</i><i>324</i><i>288</i><i>259</i><i>216</i><i>173</i><i>162</i><i>144</i><i>108</i><i>10.37</i><i>1728</i><i>1296</i><i>1152</i><i>1037</i><i>943</i><i>864</i><i>691</i><i>648</i><i>576</i><i>518</i><i>432</i><i>346</i><i>324</i><i>288</i><i>216</i><i>20.74</i><i>3456</i><i>2592</i><i>2304</i><i>2100</i><i>2074</i><i>1907</i><i>1885</i><i>1728</i><i>1481</i><i>1382</i><i>1296</i><i>1220</i><i>1152</i><i>1037</i><i>864</i><i>691</i><i>648</i><i>576</i><i>432</i><i>6_48</i><i></i><i></i><i></i></div>
<div class="r t"><b>22</b><i></i><i>HBR2.5 (DP 1.3)</i><i>25</i><i>6.75</i><i>5.4</i><i>5.4</i><i>900</i><i>675</i><i>600</i><i>450</i><i>360</i><i>338</i><i>300</i><i>270</i><i>225</i><i>180</i><i>169</i><i>150</i><i>113</i><i>10.8</i><i>1800</i><i>1350</i><i>1200</i><i>1080</i><i>982</i><i>900</i><i>720</i><i>675</i><i>600</i><i>540</i><i>450</i><i>360</i><i>338</i><i>300</i><i>225</i><i>21.6</i><i>3600</i><i>2700</i><i>2400</i><i>2187</i><i>2160</i><i>1986</i><i>1964</i><i>1800</i><i>1543</i><i>1440</i><i>1350</i><i>1271</i><i>1200</i><i>1080</i><i>900</i><i>720</i><i>675</i><i>600</i><i>450</i><i>HBR2.5 (DP 1.3)</i><i></i><i></i><i></i></div>
<div class="r t yel"><b>23</b><i></i><i>HBR3 (DP 1.3)</i><i>30</i><i>8.1</i><i>6.48</i><i>6.48</i><i>1080</i><i>810</i><i>720</i><i>540</i><i>432</i><i>405</i><i>360</i><i>324</i><i>270</i><i>216</i><i>203</i><i>180</i><i>135</i><i>12.96</i><i>2160</i><i>1620</i><i>1440</i><i>1296</i><i>1178</i><i>1080</i><i>864</i><i>810</i><i>720</i><i>648</i><i>540</i><i>432</i><i>405</i><i>360</i><i>270</i><i>25.92</i><i>4320</i><i>3240</i><i>2880</i><i>2625</i><i>2592</i><i>2383</i><i>2356</i><i>2160</i><i>1851</i><i>1728</i><i>1620</i><i>1525</i><i>1440</i><i>1296</i><i>1080</i><i>864</i><i>810</i><i>720</i><i>540</i><i>HBR3 (DP 1.3)</i><i>5K 5120x2880 60Hz 8bpc 938MHz</i><i>8K 7680x4320 30Hz 8bpc 1030MHz</i><i>8K 76</i></div>
<div class="r t"><b>24</b><i></i><i>9_72</i><i>36</i><i>9.72</i><i>7.776</i><i>7.776</i><i>1296</i><i>972</i><i>864</i><i>648</i><i>518</i><i>486</i><i>432</i><i>389</i><i>324</i><i>259</i><i>243</i><i>216</i><i>162</i><i>15.55</i><i>2592</i><i>1944</i><i>1728</i><i>1555</i><i>1414</i><i>1296</i><i>1037</i><i>972</i><i>864</i><i>778</i><i>648</i><i>518</i><i>486</i><i>432</i><i>324</i><i>31.1</i><i>5184</i><i>3888</i><i>3456</i><i>3150</i><i>3110</i><i>2860</i><i>2828</i><i>2592</i><i>2222</i><i>2074</i><i>1944</i><i>1830</i><i>1728</i><i>1555</i><i>1296</i><i>1037</i><i>972</i><i>864</i><i>648</i><i>9_72</i><i></i><i></i><i></i></div>
<div class="r t"><b>25</b><i></i><i>HBR2x2 (dual DP 1.2)</i><i>40</i><i>10.8</i><i>8.64</i><i>8.64</i><i>1440</i><i>1080</i><i>960</i><i>720</i><i>576</i><i>540</i><i>480</i><i>432</i><i>360</i><i>288</i><i>270</i><i>240</i><i>180</i><i>17.28</i><i>2880</i><i>2160</i><i>1920</i><i>1728</i><i>1571</i><i>1440</i><i>1152</i><i>1080</i><i>960</i><i>864</i><i>720</i><i>576</i><i>540</i><i>480</i><i>360</i><i>34.56</i><i>5760</i><i>4320</i><i>3840</i><i>3500</i><i>3456</i><i>3178</i><i>3142</i><i>2880</i><i>2469</i><i>2304</i><i>2160</i><i>2033</i><i>1920</i><i>1728</i><i>1440</i><i>1152</i><i>1080</i><i>960</i><i>720</i><i>HBR2x2 (dual DP 1.2)</i><i>Dell 5K 5120x2880 60Hz 10bpc 966MHz</i><i></i><i></i></div>
<div class="r t"><b>26</b><i></i><i>UHBR 10 (DP 2.0)</i><i></i><i>10</i><i>9.67125</i><i>9.671</i><i>1612</i><i>1209</i><i>1075</i><i>806</i><i>645</i><i>604</i><i>537</i><i>484</i><i>403</i><i>322</i><i>302</i><i>269</i><i>201</i><i>19.34</i><i>3224</i><i>2418</i><i>2149</i><i>1934</i><i>1758</i><i>1612</i><i>1290</i><i>1209</i><i>1075</i><i>967</i><i>806</i><i>645</i><i>604</i><i>537</i><i>403</i><i>38.69</i><i>6448</i><i>4836</i><i>4298</i><i>3917</i><i>3869</i><i>3557</i><i>3517</i><i>3224</i><i>2763</i><i>2579</i><i>2418</i><i>2276</i><i>2149</i><i>1934</i><i>1612</i><i>1290</i><i>1209</i><i>1075</i><i>806</i><i>UHBR 10 (DP 2.0)</i><i></i><i></i><i></i></div>
<div class="r t grn"><b>27</b><i></i><i>USB4 (10,20,40Gbps)</i><i></i><i>10</i><i>9.696969697</i><i>9.697</i><i>1616</i><i>1212</i><i>1077</i><i>808</i><i>646</i><i>606</i><i>539</i><i>485</i><i>404</i><i>323</i><i>303</i><i>269</i><i>202</i><i>19.39</i><i>3232</i><i>2424</i><i>2155</i><i>1939</i><i>1763</i><i>1616</i><i>1293</i><i>1212</i><i>1077</i><i>970</i><i>808</i><i>646</i><i>606</i><i>539</i><i>404</i><i>38.79</i><i>6465</i><i>4848</i><i>4310</i><i>3928</i><i>3879</i><i>3567</i><i>3526</i><i>3232</i><i>2771</i><i>2586</i><i>2424</i><i>2282</i><i>2155</i><i>1939</i><i>1616</i><i>1293</i><i>1212</i><i>1077</i><i>808</i><i>USB4</i><i></i><i></i><i></i></div>
<div class="r t grn"><b>28</b><i></i><i>Thunderbolt (1,2,3/4)</i><i></i><i>10.3125</i><i>10</i><i>10</i><i>1667</i><i>1250</i><i>1111</i><i>833</i><i>667</i><i>625</i><i>556</i><i>500</i><i>417</i><i>333</i><i>313</i><i>278</i><i>208</i><i>20</i><i>3333</i><i>2500</i><i>2222</i><i>2000</i><i>1818</i><i>1667</i><i>1333</i><i>1250</i><i>1111</i><i>1000</i><i>833</i><i>667</i><i>625</i><i>556</i><i>417</i><i>40</i><i>6667</i><i>5000</i><i>4444</i><i>4051</i><i>4000</i><i>3678</i><i>3636</i><i>3333</i><i>2857</i><i>2667</i><i>2500</i><i>2353</i><i>2222</i><i>2000</i><i>1667</i><i>1333</i><i>1250</i><i>1111</i><i>833</i><i>Thunderbolt</i><i>Apple 6K 6016x3384 60Hz 10bpc 1286MHz (1298MHz for dual 3008x3384)</i><i></i><i></i></div>
<div class="r t"><b>29</b><i></i><i>HBR3x2 (dual DP 1.3)</i><i>60</i><i>16.2</i><i>12.96</i><i>12.96</i><i>2160</i><i>1620</i><i>1440</i><i>1080</i><i>864</i><i>810</i><i>720</i><i>648</i><i>540</i><i>432</i><i>405</i><i>360</i><i>270</i><i>25.92</i><i>4320</i><i>3240</i><i>2880</i><i>2592</i><i>2356</i><i>2160</i><i>1728</i><i>1620</i><i>1440</i><i>1296</i><i>1080</i><i>864</i><i>810</i><i>720</i><i>540</i><i>51.84</i><i>8640</i><i>6480</i><i>5760</i><i>5250</i><i>5184</i><i>4767</i><i>4713</i><i>4320</i><i>3703</i><i>3456</i><i>3240</i><i>3049</i><i>2880</i><i>2592</i><i>2160</i><i>1728</i><i>1620</i><i>1440</i><i>1080</i><i>HBR3x2 (dual DP 1.3)</i><i>Dell 8K 7680x4320 60Hz 8bpc 2118MHz</i><i></i><i></i></div>
<div class="r t"><b>30</b><i></i><i>UHBR 13.5 (DP 2.0)</i><i></i><i>13.5</i><i>13.0561875</i><i>13.06</i><i>2176</i><i>1632</i><i>1451</i><i>1088</i><i>870</i><i>816</i><i>725</i><i>653</i><i>544</i><i>435</i><i>408</i><i>363</i><i>272</i><i>26.11</i><i>4352</i><i>3264</i><i>2901</i><i>2611</i><i>2374</i><i>2176</i><i>1741</i><i>1632</i><i>1451</i><i>1306</i><i>1088</i><i>870</i><i>816</i><i>725</i><i>544</i><i>52.22</i><i>8704</i><i>6528</i><i>5803</i><i>5289</i><i>5222</i><i>4802</i><i>4748</i><i>4352</i><i>3730</i><i>3482</i><i>3264</i><i>3072</i><i>2901</i><i>2611</i><i>2176</i><i>1741</i><i>1632</i><i>1451</i><i>1088</i><i>UHBR 13.5 (DP 2.0)</i><i>8K 7680x4320 60Hz 8bpc 2090MHz</i><i></i><i></i></div>
<div class="r t bb"><b>31</b><i></i><i>UHBR 20 (DP 2.0)</i><i></i><i>20</i><i>19.3425</i><i>19.34</i><i>3224</i><i>2418</i><i>2149</i><i>1612</i><i>1290</i><i>1209</i><i>1075</i><i>967</i><i>806</i><i>645</i><i>604</i><i>537</i><i>403</i><i>38.69</i><i>6448</i><i>4836</i><i>4298</i><i>3869</i><i>3517</i><i>3224</i><i>2579</i><i>2418</i><i>2149</i><i>1934</i><i>1612</i><i>1290</i><i>1209</i><i>1075</i><i>806</i><i>77.37</i><i>12895</i><i>9671</i><i>8597</i><i>7835</i><i>7737</i><i>7114</i><i>7034</i><i>6448</i><i>5526</i><i>5158</i><i>4836</i><i>4551</i><i>4298</i><i>3869</i><i>3224</i><i>2579</i><i>2418</i><i>2149</i><i>1612</i><i>UHBR 20 (DP 2.0)</i><i>8K 7680x4320 60Hz 12bpc 2090MHz</i><i></i><i></i></div>
<div class="r t2 h"><b>32</b><i></i><i>HDMI 1.0/DVI</i><i></i><i>1.65</i><i>1.32</i><i></i><i></i><i></i><i></i><i></i><i></i><i></i><i></i><i></i><i></i><i></i><i></i><i></i><i></i><i></i><i></i><i></i><i></i><i></i><i></i><i></i><i></i><i></i><i></i><i></i><i></i><i></i><i></i><i></i><i></i><i>3.96</i><i>660</i><i>495</i><i>440</i><i>401</i><i>396</i><i>364</i><i>360</i><i>330</i><i>283</i><i>264</i><i>248</i><i>233</i><i>220</i><i>198</i><i>165</i><i>132</i><i>124</i><i>110</i><i>82.5</i><i>DVI/HDMI 1.0</i><i>1080p 1920x1080 60Hz 8bpc 148.5MHz</i><i></i><i></i></div>
<div class="r t2 h"><b>33</b><i></i><i>Dual Link DVI</i><i></i><i>3.3</i><i>2.64</i><i></i><i></i><i></i><i></i><i></i><i></i><i></i><i></i><i></i><i></i><i></i><i></i><i></i><i></i><i></i><i></i><i></i><i></i><i></i><i></i><i></i><i></i><i></i><i></i><i></i><i></i><i></i><i></i><i></i><i></i><i>7.92</i><i>1320</i><i>990</i><i>880</i><i>802</i><i>792</i><i>728</i><i>720</i><i>660</i><i>566</i><i>528</i><i>495</i><i>466</i><i>440</i><i>396</i><i>330</i><i>264</i><i>248</i><i>220</i><i>165</i><i>Dual Link DVI</i><i>16:10 2560x1600 60Hz 10bpc 269MHz</i><i></i><i></i></div>
<div class="r t2 h"><b>34</b><i></i><i>HDMI 1.3, 1.4</i><i></i><i>3.4</i><i>2.72</i><i></i><i></i><i></i><i></i><i></i><i></i><i></i><i></i><i></i><i></i><i></i><i></i><i></i><i></i><i></i><i></i><i></i><i></i><i></i><i></i><i></i><i></i><i></i><i></i><i></i><i></i><i></i><i></i><i></i><i></i><i>8.16</i><i>1360</i><i>1020</i><i>907</i><i>824</i><i>816</i><i>749</i><i>742</i><i>680</i><i>583</i><i>544</i><i>510</i><i>480</i><i>453</i><i>408</i><i>340</i><i>272</i><i>255</i><i>227</i><i>170</i><i>HDMI 1.3, 1.4</i><i>4K 3840x2160 30Hz 8bpc 297MHz</i><i></i><i></i></div>
<div class="r t2 h bb2"><b>35</b><i></i><i>HDMI 2.0</i><i></i><i>6</i><i>4.8</i><i></i><i></i><i></i><i></i><i></i><i></i><i></i><i></i><i></i><i></i><i></i><i></i><i></i><i></i><i></i><i></i><i></i><i></i><i></i><i></i><i></i><i></i><i></i><i></i><i></i><i></i><i></i><i></i><i></i><i></i><i>14.4</i><i>2400</i><i>1800</i><i>1600</i><i>1458</i><i>1440</i><i>1324</i><i>1309</i><i>1200</i><i>1029</i><i>960</i><i>900</i><i>847</i><i>800</i><i>720</i><i>600</i><i>480</i><i>450</i><i>400</i><i>300</i><i>HDMI 2.0</i><i>4K 3840x2160 60Hz 8bpc 594MHz</i><i></i><i></i></div>
<div class="r t2 h"><b>36</b><i></i><i>FRL1 (HDMI 2.1)</i><i></i><i>3</i><i>2.666666667</i><i></i><i></i><i></i><i></i><i></i><i></i><i></i><i></i><i></i><i></i><i></i><i></i><i></i><i></i><i></i><i></i><i></i><i></i><i></i><i></i><i></i><i></i><i></i><i></i><i></i><i></i><i></i><i></i><i></i><i></i><i>8</i><i>1333</i><i>1000</i><i>889</i><i>810</i><i>800</i><i>736</i><i>727</i><i>667</i><i>571</i><i>533</i><i>500</i><i>471</i><i>444</i><i>400</i><i>333</i><i>267</i><i>250</i><i>222</i><i>167</i><i>FRL1 (HDMI 2.1)</i><i></i><i></i><i></i></div>
<div class="r t2 h"><b>37</b><i></i><i>FRL2 (HDMI 2.1)</i><i></i><i>6</i><i>5.333333333</i><i></i><i></i><i></i><i></i><i></i><i></i><i></i><i></i><i></i><i></i><i></i><i></i><i></i><i></i><i></i><i></i><i></i><i></i><i></i><i></i><i></i><i></i><i></i><i></i><i></i><i></i><i></i><i></i><i></i><i></i><i>16</i><i>2667</i><i>2000</i><i>1778</i><i>1620</i><i>1600</i><i>1471</i><i>1455</i><i>1333</i><i>1143</i><i>1067</i><i>1000</i><i>941</i><i>889</i><i>800</i><i>667</i><i>533</i><i>500</i><i>444</i><i>333</i><i>FRL2 (HDMI 2.1)</i><i></i><i></i><i></i></div>
<div class="r t2 h"><b>38</b><i></i><i>FRL3 (HDMI 2.1)</i><i></i><i>6</i><i>5.333333333</i><i></i><i></i><i></i><i></i><i></i><i></i><i></i><i></i><i></i><i></i><i></i><i></i><i></i><i></i><i></i><i></i><i></i><i></i><i></i><i></i><i></i><i></i><i></i><i></i><i></i><i></i><i></i><i></i><i></i><i></i><i>21.33</i><i>3556</i><i>2667</i><i>2370</i><i>2160</i><i>2133</i><i>1962</i><i>1939</i><i>1778</i><i>1524</i><i>1422</i><i>1333</i><i>1255</i><i>1185</i><i>1067</i><i>889</i><i>711</i><i>667</i><i>593</i><i>444</i><i>FRL3 (HDMI 2.1)</i><i></i><i></i><i></i></div>
<div class="r t2 h"><b>39</b><i></i><i>FRL4 (HDMI 2.1)</i><i></i><i>8</i><i>7.111111111</i><i></i><i></i><i></i><i></i><i></i><i></i><i></i><i></i><i></i><i></i><i></i><i></i><i></i><i></i><i></i><i></i><i></i><i></i><i></i><i></i><i></i><i></i><i></i><i></i><i></i><i></i><i></i><i></i><i></i><i></i><i>28.44</i><i>4741</i><i>3556</i><i>3160</i><i>2880</i><i>2844</i><i>2616</i><i>2586</i><i>2370</i><i>2032</i><i>1896</i><i>1778</i><i>1673</i><i>1580</i><i>1422</i><i>1185</i><i>948</i><i>889</i><i>790</i><i>593</i><i>FRL4 (HDMI 2.1)</i><i></i><i></i><i></i></div>
<div class="r t2 h"><b>40</b><i></i><i>FRL5 (HDMI 2.1)</i><i></i><i>10</i><i>8.888888889</i><i></i><i></i><i></i><i></i><i></i><i></i><i></i><i></i><i></i><i></i><i></i><i></i><i></i><i></i><i></i><i></i><i></i><i></i><i></i><i></i><i></i><i></i><i></i><i></i><i></i><i></i><i></i><i></i><i></i><i></i><i>35.56</i><i>5926</i><i>4444</i><i>3951</i><i>3601</i><i>3556</i><i>3269</i><i>3232</i><i>2963</i><i>2540</i><i>2370</i><i>2222</i><i>2092</i><i>1975</i><i>1778</i><i>1481</i><i>1185</i><i>1111</i><i>988</i><i>741</i><i>FRL5 (HDMI 2.1)</i><i></i><i></i><i></i></div>
<div class="r t2 h bb2"><b>41</b><i></i><i>FRL6 (HDMI 2.1)</i><i></i><i>12</i><i>10.66666667</i><i></i><i></i><i></i><i></i><i></i><i></i><i></i><i></i><i></i><i></i><i></i><i></i><i></i><i></i><i></i><i></i><i></i><i></i><i></i><i></i><i></i><i></i><i></i><i></i><i></i><i></i><i></i><i></i><i></i><i></i><i>42.67</i><i>7111</i><i>5333</i><i>4741</i><i>4321</i><i>4267</i><i>3923</i><i>3879</i><i>3556</i><i>3048</i><i>2844</i><i>2667</i><i>2510</i><i>2370</i><i>2133</i><i>1778</i><i>1422</i><i>1333</i><i>1185</i><i>889</i><i>FRL6 (HDMI 2.1)</i><i>4K 3840x2160 120Hz 10bpc 1188MHz</i><i>8K 7680x4320 60Hz DSC@17bpp 2376MHz</i><i>8K 76</i></div>
<div class="r"><b>42</b><i></i><i></i><i></i><i></i><i></i><i></i><i></i><i></i><i></i><i></i><i></i><i></i><i></i><i></i><i></i><i></i><i></i><i></i><i></i><i></i><i></i><i></i><i></i><i></i><i></i><i></i><i></i><i></i><i></i><i></i><i></i><i></i><i></i><i></i><i></i><i></i><i></i><i></i><i></i><i></i><i></i><i></i><i></i><i></i><i></i><i></i><i></i><i></i><i></i><i></i><i></i><i></i><i></i><i></i><i></i><i></i><i>8K 7680x4320 30Hz 10bpc 1188MHz</i><i></i><i></i></div>
<div class="r"><b>43</b><i></i><i></i><i></i><i></i><i></i><i></i><i></i><i></i><i></i><i></i><i></i><i></i><i></i><i></i><i></i><i></i><i></i><i></i><i></i><i></i><i></i><i></i><i></i><i></i><i></i><i></i><i></i><i></i><i></i><i></i><i></i><i></i><i></i><i></i><i></i><i></i><i></i><i></i><i></i><i></i><i></i><i></i><i></i><i></i><i></i><i></i><i></i><i></i><i></i><i></i><i></i><i></i><i></i><i></i><i></i><i></i><i></i><i></i><i></i></div>
</div>

<!-- sheet tabs -->
<div class="a" style="left:43px;top:699px;width:1914px;height:19px;background:#efefef;border-top:1px solid #d6d6d6"></div>
<div class="a" style="left:52px;top:702px;font-size:10px;color:#bbb">◂ &nbsp;▸</div>
<div class="a" style="left:88px;top:699px;width:99px;height:18px;background:#fff;box-shadow:0 1px 2px rgba(0,0,0,.15)"></div>
<div class="a" style="left:102px;top:703px;font-size:10.5px;font-weight:bold;color:#217346">Max pixel clocks</div>
<div class="a" style="left:203px;top:703px;font-size:10.5px;color:#444">Bandwidth per resolution</div>
<div class="sep" style="left:324px;top:701px;height:14px"></div>
<div class="a" style="left:334px;top:700px;font-size:13px;color:#555">+</div>
<div class="sep" style="left:353px;top:701px;height:14px"></div>
<!-- status bar -->
<div class="a" style="left:43px;top:718px;width:1914px;height:17px;background:#efefef;border-top:1px solid #dcdcdc"></div>
<div class="a t10" style="left:60px;top:721px;color:#555">Ready</div>
<svg class="a" style="left:101px;top:720px" width="50" height="13" fill="none" stroke="#666"><path d="M2 2 H10 M2 11 H10 M6 2 V11 M4 4 L6 2 L8 4"/><circle cx="31" cy="3" r="1.5"/><path d="M27 5 H35 M31 5 V8 L28 12 M31 8 L34 12"/></svg>
<div class="a t10" style="left:141px;top:721px;color:#555">Accessibility: Investigate</div>
<div class="a t10" style="left:1463px;top:721px;color:#555">Average: 1262.388492</div>
<div class="a t10" style="left:1576px;top:721px;color:#555">Count: 96</div>
<div class="a t10" style="left:1634px;top:721px;color:#555">Sum: 116139.7412</div>
<div class="a" style="left:1717px;top:719px;width:27px;height:16px;background:#d6d6d6"></div>
<svg class="a" style="left:1724px;top:721px" width="80" height="12" fill="none" stroke="#777"><rect x="1" y="1" width="11" height="10"/><path d="M1 4.5 H12 M1 8 H12 M4.5 1 V11 M8 1 V11"/><rect x="28" y="1" width="9" height="10"/><path d="M30 4 H35 M30 6 H35 M30 8 H35"/><path d="M55 1 V11 H64 V1 M55 6 H60 V1"/></svg>
<div class="a" style="left:1804px;top:719px;font-size:11px;color:#666">–</div>
<div class="a" style="left:1816px;top:726px;width:75px;height:1px;background:#999"></div>
<div class="a" style="left:1849px;top:721px;width:10px;height:10px;border-radius:5px;background:#fff;box-shadow:0 0 2px rgba(0,0,0,.5)"></div>
<div class="a" style="left:1897px;top:719px;font-size:11px;color:#666">+</div>
<div class="a t10" style="left:1916px;top:721px;color:#555">100%</div>
</body></html>
